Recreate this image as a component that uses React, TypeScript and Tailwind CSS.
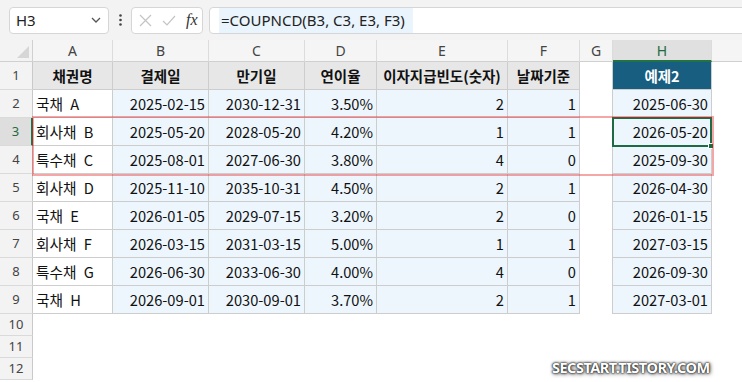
import React from "react";

const COLS = [
  { key: "A", w: 80 },
  { key: "B", w: 96 },
  { key: "C", w: 96 },
  { key: "D", w: 72 },
  { key: "E", w: 131 },
  { key: "F", w: 72 },
  { key: "G", w: 33 },
  { key: "H", w: 99 },
];

const HEAD = ["채권명", "결제일", "만기일", "연이율", "이자지급빈도(숫자)", "날짜기준"];

const DATA: string[][] = [
  ["국채\u2002A", "2025-02-15", "2030-12-31", "3.50%", "2", "1", "2025-06-30"],
  ["회사채\u2002B", "2025-05-20", "2028-05-20", "4.20%", "1", "1", "2026-05-20"],
  ["특수채\u2002C", "2025-08-01", "2027-06-30", "3.80%", "4", "0", "2025-09-30"],
  ["회사채\u2002D", "2025-11-10", "2035-10-31", "4.50%", "2", "1", "2026-04-30"],
  ["국채\u2002E", "2026-01-05", "2029-07-15", "3.20%", "2", "0", "2026-01-15"],
  ["회사채\u2002F", "2026-03-15", "2031-03-15", "5.00%", "1", "1", "2027-03-15"],
  ["특수채\u2002G", "2026-06-30", "2033-06-30", "4.00%", "4", "0", "2026-09-30"],
  ["국채\u2002H", "2026-09-01", "2030-09-01", "3.70%", "2", "1", "2027-03-01"],
];

const font = { fontFamily: '"Noto Sans", "Noto Sans CJK KR", sans-serif' };
const cellFont = { fontFamily: '"Noto Sans CJK KR", "Noto Sans", sans-serif' };

function RowHeader({ n, h, active }: { n: number; h: string; active?: boolean }) {
  return (
    <div
      className={
        "w-[33px] shrink-0 flex items-center justify-center text-[13px] border-b border-[#dadada] box-border " +
        h +
        (active
          ? " bg-[#dedede] text-[#1d6b40] border-r-2 border-r-[#217346]"
          : " bg-[#f3f3f3] text-[#444] border-r border-r-[#c9c9c9]")
      }
      style={font}
    >
      {n}
    </div>
  );
}

export default function App() {
  return (
    <div className="w-[742px] h-[382px] overflow-hidden bg-white relative" style={font}>
      {/* formula bar */}
      <div className="h-[40px] bg-[#f3f3f3] flex items-center pl-[9px]">
        <div className="w-[100px] h-[27px] bg-white border border-[#d6d6d6] rounded-[4px] flex items-center justify-between pl-[6px] pr-[6px]">
          <span className="text-[15px] text-[#222]">H3</span>
          <svg width="10" height="6" viewBox="0 0 10 6" className="mr-[1px]">
            <path d="M1 1 L5 5 L9 1" fill="none" stroke="#555" strokeWidth="1.3" />
          </svg>
        </div>
        <div className="w-[22px] flex justify-center">
          <svg width="3" height="12" viewBox="0 0 3 12">
            <circle cx="1.5" cy="1.5" r="1.3" fill="#444" />
            <circle cx="1.5" cy="6" r="1.3" fill="#444" />
            <circle cx="1.5" cy="10.5" r="1.3" fill="#444" />
          </svg>
        </div>
        <div className="w-[72px] h-[27px] bg-white border border-[#d6d6d6] rounded-[4px] flex items-center pl-[7px]">
          <svg width="13" height="13" viewBox="0 0 13 13">
            <path d="M1 1 L12 12 M12 1 L1 12" stroke="#c4c4c4" strokeWidth="1.2" fill="none" />
          </svg>
          <svg width="14" height="11" viewBox="0 0 14 11" className="ml-[10px]">
            <path d="M1 6 L5 10 L13 1" stroke="#c4c4c4" strokeWidth="1.2" fill="none" />
          </svg>
          <span
            className="ml-[10px] text-[16px] italic text-[#333] leading-none"
            style={{ fontFamily: '"Liberation Serif", "DejaVu Serif", serif' }}
          >
            fx
          </span>
        </div>
        <div className="ml-[6px] flex-1 -mr-[6px] h-[27px] bg-white border border-[#d6d6d6] rounded-[4px] flex items-center pl-[9px]">
          <span className="bg-[#eaf4fd] text-[15px] text-[#222] pl-[2px] pr-[8px] leading-[25px]">
            =COUPNCD(B3, C3, E3, F3)
          </span>
        </div>
      </div>

      {/* column headers */}
      <div className="flex h-[22px]">
        <div className="w-[33px] shrink-0 bg-[#f3f3f3] border-r border-b border-[#d0d0d0] relative box-border">
          <svg width="12" height="12" viewBox="0 0 12 12" className="absolute right-[3px] bottom-[3px]">
            <path d="M12 0 L12 12 L0 12 Z" fill="#d6d6d6" />
          </svg>
        </div>
        {COLS.map((c) => (
          <div
            key={c.key}
            className={
              "shrink-0 flex items-center justify-center text-[14px] box-border border-r border-r-[#dcdcdc] " +
              (c.key === "H"
                ? "bg-[#e0e0e0] text-[#1d6b40] border-b-2 border-b-[#217346]"
                : "bg-[#f5f5f5] text-[#444] border-b border-b-[#d0d0d0]")
            }
            style={{ width: c.w }}
          >
            {c.key}
          </div>
        ))}
        <div className="flex-1 bg-[#f5f5f5] border-b border-[#d0d0d0] box-border" />
      </div>

      {/* row 1 headers */}
      <div className="flex h-[28px]" style={cellFont}>
        <RowHeader n={1} h="h-[28px]" />
        {HEAD.map((t, i) => (
          <div
            key={i}
            className="shrink-0 bg-[#e7e7e7] border-r border-b border-[#cdcdcd] box-border flex items-center justify-center font-bold text-[14.5px] text-[#111]"
            style={{ width: COLS[i].w }}
          >
            {t}
          </div>
        ))}
        <div className="w-[33px] shrink-0 border-r border-[#cdcdcd] box-border" />
        <div className="w-[99px] shrink-0 bg-[#175e80] border-r border-b border-[#cdcdcd] box-border flex items-center justify-center font-bold text-[14.5px] text-white">
          예제2
        </div>
      </div>

      {/* data rows */}
      {DATA.map((r, ri) => (
        <div key={ri} className="flex h-[28px]" style={cellFont}>
          <RowHeader n={ri + 2} h="h-[28px]" active={ri === 1} />
          {r.slice(0, 6).map((t, ci) => (
            <div
              key={ci}
              className={
                "shrink-0 border-r border-b border-[#cdcdcd] box-border flex items-center text-[14.67px] text-[#111] " +
                (ci === 0 ? "bg-white justify-start pl-[3px]" : "bg-[#edf6fd] justify-end pr-[3px]")
              }
              style={{ width: COLS[ci].w }}
            >
              {t}
            </div>
          ))}
          <div className="w-[33px] shrink-0 border-r border-[#cdcdcd] box-border" />
          <div className="w-[99px] shrink-0 bg-[#edf6fd] border-r border-b border-[#cdcdcd] box-border flex items-center justify-end pr-[3px] text-[14.67px] text-[#111]">
            {r[6]}
          </div>
        </div>
      ))}

      {/* empty rows */}
      {[10, 11, 12].map((n) => (
        <div key={n} className="flex h-[22px]">
          <RowHeader n={n} h="h-[22px]" />
        </div>
      ))}

      {/* selection */}
      <div className="absolute left-[612px] top-[117px] w-[100px] h-[30px] border-2 border-[#1e6b43]" />
      <div className="absolute left-[708px] top-[143px] w-[6px] h-[6px] bg-[#1e6b43] border border-white" />

      {/* red annotation box */}
      <div className="absolute left-[32px] top-[116px] w-[682px] h-[60px] border-2 border-[rgba(228,20,20,0.38)]" />

      {/* watermark */}
      <div
        className="absolute left-[552px] top-[357px] text-[14.5px] font-bold text-white tracking-[-0.5px] [text-shadow:0_0_1px_#222,0_0_2px_#333,0_0_3px_#444,1px_1px_4px_#555]"
        style={{ fontFamily: '"Noto Sans", sans-serif' }}
      >
        SECSTART.TISTORY.COM
      </div>
    </div>
  );
}
